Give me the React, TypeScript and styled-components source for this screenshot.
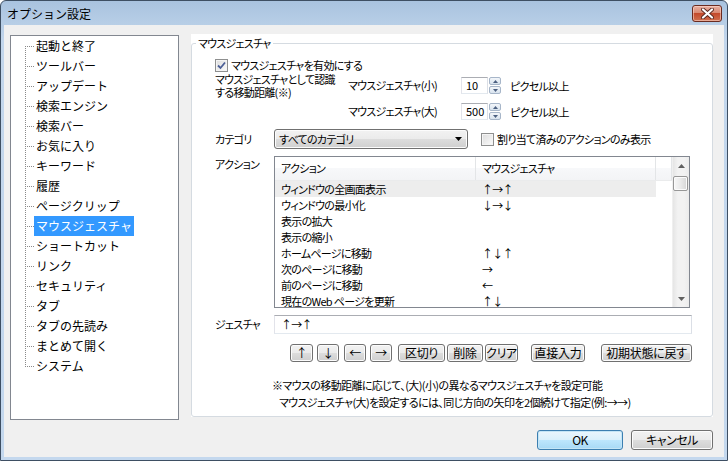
import React from "react";
import styled, { createGlobalStyle } from "styled-components";

const FONT = `"Noto Sans CJK JP", "Noto Sans", sans-serif`;

const GlobalStyle = createGlobalStyle`
	html, body {
		margin: 0;
		padding: 0;
		background: #fff;
	}
	body {
		font-family: ${FONT};
		font-size: 12px;
		color: #000;
	}
	* {
		box-sizing: border-box;
	}
`;

const Window = styled.div`
	width: 728px;
	height: 461px;
	display: flex;
	flex-direction: column;
	background: linear-gradient(#a9c3df, #c2d6ec 40px, #c4d8ee);
	border: 1px solid #3e4f63;
	border-radius: 6px 6px 0 0;
	overflow: hidden;
`;

const TitleBar = styled.div`
	height: 24px;
	flex: none;
	display: flex;
	align-items: flex-start;
	justify-content: space-between;
	padding: 0 5px 0 5px;
`;

const TitleText = styled.span`
	font-size: 12px;
	line-height: 25px;
	margin-left: 1px;
	color: #000;
`;

const CloseButton = styled.div`
	width: 30px;
	height: 17px;
	margin-top: 4px;
	border: 1px solid #6a2b20;
	border-radius: 3px;
	background: linear-gradient(#e8b0a2, #d98a73 45%, #c44a2c 50%, #d0704f);
	display: flex;
	align-items: center;
	justify-content: center;
	box-shadow: inset 0 0 0 1px rgba(255, 220, 210, 0.55);
`;

const Client = styled.div`
	flex: 1;
	margin: 0 3px 3px 3px;
	background: #f0f0f0;
	display: flex;
	flex-direction: column;
`;

const Main = styled.div`
	display: flex;
	align-items: flex-start;
	gap: 12px;
	padding: 9px 0 0 6px;
`;

const Tree = styled.div`
	width: 169px;
	height: 385px;
	margin-top: 1px;
	background: #fff;
	border: 1px solid #828790;
	padding-left: 14px;
`;

const TreeItem = styled.div`
	display: flex;
	align-items: center;
	height: 20px;
`;

const Connector = styled.span<{ $first?: boolean; $last?: boolean }>`
	width: 9px;
	height: 20px;
	flex: none;
	background-image: repeating-linear-gradient(
			to bottom,
			#8a8a8a 0 1px,
			transparent 1px 2px
		),
		repeating-linear-gradient(to right, #8a8a8a 0 1px, transparent 1px 2px);
	background-size: 1px ${(p) => (p.$first ? "10px" : p.$last ? "11px" : "20px")},
		9px 1px;
	background-position: 0 ${(p) => (p.$first ? "10px" : "0")}, 0 10px;
	background-repeat: no-repeat;
`;

const TreeLabel = styled.span<{ $selected?: boolean }>`
	font-size: 12px;
	line-height: 20px;
	padding: 0 2px;
	white-space: nowrap;
	background: ${(p) => (p.$selected ? "#3399ff" : "transparent")};
	color: ${(p) => (p.$selected ? "#fff" : "#000")};
`;

const Page = styled.div`
	width: 522px;
	height: 383px;
	background: #fff;
	display: flex;
	font-size: 11px;
	letter-spacing: -0.7px;
	font-feature-settings: "palt";
`;

const Group = styled.fieldset`
	flex: 1;
	margin: 0;
	padding: 0;
	min-width: 0;
	border: 1px solid #d5dbe1;
	border-radius: 3px;
`;

const GroupTitle = styled.legend`
	margin-left: 4px;
	padding: 0 2px;
	line-height: 18px;
`;

const Content = styled.div`
	padding-left: 23px;
`;

const Row = styled.div<{ $mt: number; $top?: boolean }>`
	display: flex;
	align-items: ${(p) => (p.$top ? "flex-start" : "center")};
	margin-top: ${(p) => p.$mt}px;
`;

const Label = styled.span<{ $w: number }>`
	width: ${(p) => p.$w}px;
	flex: none;
	white-space: nowrap;
	line-height: 17px;
`;

const CheckBox = styled.span<{ $ml?: number }>`
	width: 13px;
	height: 13px;
	flex: none;
	margin-left: ${(p) => p.$ml ?? 0}px;
	border: 1px solid #8e8f8f;
	background: linear-gradient(135deg, #dcdcdc, #fbfbfb);
	box-shadow: inset 0 0 0 1px #f4f4f4;
	display: flex;
	align-items: center;
	justify-content: center;
`;

const CheckText = styled.span`
	margin-left: 3px;
	white-space: nowrap;
	line-height: 15px;
`;

const Distance = styled.div`
	display: grid;
	grid-template-columns: 133px 113px 27px 13px auto;
	grid-template-rows: 17px 17px;
	row-gap: 9px;
	align-items: center;
	margin-top: 4px;
`;

const DistanceLabel = styled.div`
	grid-row: 1 / 3;
	align-self: start;
	margin-top: -4px;
	line-height: 13px;
	white-space: nowrap;
`;

const NumberBox = styled.div`
	height: 17px;
	border: 1px solid #abadb3;
	border-color: #abadb3 #dbdfe6 #e3e9ef #e2e3ea;
	background: #fff;
	line-height: 15px;
	padding-left: 4px;
	letter-spacing: 0;
`;

const Spin = styled.div`
	height: 17px;
	width: 12px;
	margin-left: 1px;
	display: flex;
	flex-direction: column;
	gap: 1px;
`;

const SpinHalf = styled.div`
	flex: 1;
	border: 1px solid #a7b6c9;
	border-radius: 2px;
	background: linear-gradient(#f3f6fa, #d8e3ee);
	display: flex;
	align-items: center;
	justify-content: center;
`;

const SpinText = styled.span`
	margin-left: 9px;
	white-space: nowrap;
`;

const Select = styled.div`
	width: 194px;
	height: 20px;
	border: 1px solid #707070;
	border-radius: 3px;
	background: linear-gradient(#f2f2f2, #ebebeb 50%, #dddddd 50%, #cfcfcf);
	box-shadow: inset 0 0 0 1px #fcfcfc;
	display: flex;
	align-items: center;
	justify-content: space-between;
	padding: 0 5px 0 4px;
	line-height: 18px;
`;

const ListView = styled.div`
	width: 416px;
	height: 152px;
	border: 1px solid #828790;
	background: #fff;
	display: flex;
	overflow: hidden;
`;

const ListBody = styled.div`
	flex: 1;
	overflow: hidden;
`;

const ListHeader = styled.div`
	display: flex;
	height: 24px;
	background: linear-gradient(#ffffff, #ffffff 50%, #f7f8fa 50%, #f3f4f6);
	border-bottom: 1px solid #eaebec;
`;

const HeaderCell = styled.div<{ $w?: number }>`
	width: ${(p) => (p.$w ? `${p.$w}px` : "auto")};
	flex: ${(p) => (p.$w ? "none" : "1")};
	border-right: 1px solid #e3e5e7;
	padding-left: 6px;
	line-height: 22px;
	white-space: nowrap;
`;

const ListRow = styled.div<{ $hl?: boolean }>`
	display: flex;
	width: 381px;
	height: 16px;
	background: ${(p) => (p.$hl ? "#ededed" : "transparent")};
`;

const Cell = styled.div<{ $w: number }>`
	width: ${(p) => p.$w}px;
	flex: none;
	padding-left: 6px;
	line-height: 16px;
	white-space: nowrap;
`;

const ScrollBar = styled.div`
	width: 17px;
	flex: none;
	display: flex;
	flex-direction: column;
	background: linear-gradient(to right, #e5e5e5, #f2f2f2 30%, #f2f2f2 70%, #ebebeb);
	border-left: 1px solid #efefef;
`;

const ScrollArrow = styled.div`
	height: 17px;
	display: flex;
	align-items: center;
	justify-content: center;
`;

const Thumb = styled.div`
	height: 15px;
	margin: 2px 1px 0 0;
	border: 1px solid #979797;
	border-radius: 2px;
	background: linear-gradient(to right, #f7f7f7, #eaeaea 50%, #d6d6d6);
	box-shadow: inset 0 0 0 1px #fbfbfb;
`;

const ScrollTrack = styled.div`
	flex: 1;
`;

const TextInput = styled.div`
	width: 418px;
	height: 19px;
	border: 1px solid #abadb3;
	border-color: #abadb3 #dbdfe6 #e3e9ef #e2e3ea;
	background: #fff;
	line-height: 17px;
	padding-left: 6px;
`;

const ToolRow = styled.div`
	display: flex;
	margin-top: 10px;
	padding-left: 75px;
`;

const ToolButton = styled.div<{ $w: number; $ml: number }>`
	width: ${(p) => p.$w}px;
	height: 18px;
	margin-left: ${(p) => p.$ml}px;
	border: 1px solid #707070;
	border-radius: 3px;
	background: linear-gradient(#f2f2f2, #ebebeb 50%, #dddddd 50%, #cfcfcf);
	box-shadow: inset 0 0 0 1px #fcfcfc;
	display: flex;
	align-items: center;
	justify-content: center;
	font-size: 12px;
	letter-spacing: -0.3px;
	line-height: 16px;
	white-space: nowrap;
`;

const Notes = styled.div`
	margin-top: 15px;
	padding-left: 57px;
	letter-spacing: -0.6px;
`;

const Note = styled.div<{ $indent?: number }>`
	padding-left: ${(p) => p.$indent ?? 0}px;
	line-height: 17px;
	white-space: nowrap;
`;

const Footer = styled.div`
	display: flex;
	justify-content: flex-end;
	gap: 8px;
	margin-top: 10px;
	padding-right: 11px;
	font-feature-settings: "palt";
`;

const DialogButton = styled.div<{ $w: number; $primary?: boolean }>`
	width: ${(p) => p.$w}px;
	height: 20px;
	border: 1px solid ${(p) => (p.$primary ? "#3c7fb1" : "#707070")};
	border-radius: 3px;
	background: ${(p) =>
		p.$primary
			? "linear-gradient(#eaf6fd, #d9f0fc 50%, #bee6fd 50%, #a7d9f5)"
			: "linear-gradient(#f2f2f2, #ebebeb 50%, #dddddd 50%, #cfcfcf)"};
	box-shadow: inset 0 0 0 1px ${(p) => (p.$primary ? "#c4e5f6" : "#fcfcfc")};
	display: flex;
	align-items: center;
	justify-content: center;
	line-height: 18px;
	letter-spacing: -0.5px;
`;

const treeItems = [
	"起動と終了",
	"ツールバー",
	"アップデート",
	"検索エンジン",
	"検索バー",
	"お気に入り",
	"キーワード",
	"履歴",
	"ページクリップ",
	"マウスジェスチャ",
	"ショートカット",
	"リンク",
	"セキュリティ",
	"タブ",
	"タブの先読み",
	"まとめて開く",
	"システム",
];

const actions = [
	["ウィンドウの全画面表示", "↑→↑"],
	["ウィンドウの最小化", "↓→↓"],
	["表示の拡大", ""],
	["表示の縮小", ""],
	["ホームページに移動", "↑↓↑"],
	["次のページに移動", "→"],
	["前のページに移動", "←"],
	["現在のWeb ページを更新", "↑↓"],
];

const toolButtons = [
	{ label: "↑", w: 23, ml: 0 },
	{ label: "↓", w: 22, ml: 4 },
	{ label: "←", w: 22, ml: 5 },
	{ label: "→", w: 22, ml: 4 },
	{ label: "区切り", w: 47, ml: 6 },
	{ label: "削除", w: 36, ml: 2 },
	{ label: "クリア", w: 33, ml: 2 },
	{ label: "直接入力", w: 54, ml: 13 },
	{ label: "初期状態に戻す", w: 91, ml: 16 },
];

const Tri: React.FC<{ dir: "up" | "down"; color?: string; w?: number; h?: number }> = ({
	dir,
	color = "#4a4a4a",
	w = 7,
	h = 4,
}) => (
	<svg width={w} height={h} viewBox={`0 0 ${w} ${h}`}>
		<polygon
			points={dir === "up" ? `0,${h} ${w},${h} ${w / 2},0` : `0,0 ${w},0 ${w / 2},${h}`}
			fill={color}
		/>
	</svg>
);

const Check: React.FC = () => (
	<svg width="9" height="9" viewBox="0 0 9 9">
		<path d="M1 4.5 L3.5 7 L8 1.5" stroke="#4c5f96" strokeWidth="1.8" fill="none" />
	</svg>
);

const SpinButtons: React.FC = () => (
	<Spin>
		<SpinHalf>
			<Tri dir="up" color="#4b5f80" w={5} h={3} />
		</SpinHalf>
		<SpinHalf>
			<Tri dir="down" color="#4b5f80" w={5} h={3} />
		</SpinHalf>
	</Spin>
);

const App: React.FC = () => {
	return (
		<>
			<GlobalStyle />
			<Window>
				<TitleBar>
					<TitleText>オプション設定</TitleText>
					<CloseButton>
						<svg width="13" height="11" viewBox="0 0 13 11">
							<path
								d="M2 1.5 L11 9.5 M11 1.5 L2 9.5"
								stroke="#5a2a22"
								strokeWidth="4"
								strokeLinecap="round"
							/>
							<path
								d="M2 1.5 L11 9.5 M11 1.5 L2 9.5"
								stroke="#fff"
								strokeWidth="2.2"
								strokeLinecap="round"
							/>
						</svg>
					</CloseButton>
				</TitleBar>
				<Client>
					<Main>
						<Tree>
							{treeItems.map((t, i) => (
								<TreeItem key={t}>
									<Connector $first={i === 0} $last={i === treeItems.length - 1} />
									<TreeLabel $selected={t === "マウスジェスチャ"}>{t}</TreeLabel>
								</TreeItem>
							))}
						</Tree>
						<Page>
							<Group>
								<GroupTitle>マウスジェスチャ</GroupTitle>
								<Content>
									<Row $mt={6}>
										<CheckBox>
											<Check />
										</CheckBox>
										<CheckText>マウスジェスチャを有効にする</CheckText>
									</Row>
									<Distance>
										<DistanceLabel>
											マウスジェスチャとして認識
											<br />
											する移動距離(※)
										</DistanceLabel>
										<Label $w={113}>マウスジェスチャ(小)</Label>
										<NumberBox>10</NumberBox>
										<SpinButtons />
										<SpinText>ピクセル以上</SpinText>
										<Label $w={113}>マウスジェスチャ(大)</Label>
										<NumberBox>500</NumberBox>
										<SpinButtons />
										<SpinText>ピクセル以上</SpinText>
									</Distance>
									<Row $mt={9}>
										<Label $w={59}>カテゴリ</Label>
										<Select>
											<span>すべてのカテゴリ</span>
											<Tri dir="down" color="#000" w={7} h={4} />
										</Select>
										<CheckBox $ml={13} />
										<CheckText>割り当て済みのアクションのみ表示</CheckText>
									</Row>
									<Row $mt={7} $top>
										<Label $w={59}>アクション</Label>
										<ListView>
											<ListBody>
												<ListHeader>
													<HeaderCell $w={201}>アクション</HeaderCell>
													<HeaderCell $w={180}>マウスジェスチャ</HeaderCell>
													<HeaderCell />
												</ListHeader>
												{actions.map(([a, g], i) => (
													<ListRow key={a} $hl={i === 0}>
														<Cell $w={201}>{a}</Cell>
														<Cell $w={180}>{g}</Cell>
													</ListRow>
												))}
											</ListBody>
											<ScrollBar>
												<ScrollArrow>
													<Tri dir="up" color="#606060" w={7} h={4} />
												</ScrollArrow>
												<Thumb />
												<ScrollTrack />
												<ScrollArrow>
													<Tri dir="down" color="#606060" w={7} h={4} />
												</ScrollArrow>
											</ScrollBar>
										</ListView>
									</Row>
									<Row $mt={7}>
										<Label $w={59}>ジェスチャ</Label>
										<TextInput>↑→↑</TextInput>
									</Row>
									<ToolRow>
										{toolButtons.map((b) => (
											<ToolButton key={b.label} $w={b.w} $ml={b.ml}>
												{b.label}
											</ToolButton>
										))}
									</ToolRow>
									<Notes>
										<Note>※マウスの移動距離に応じて、(大)(小)の異なるマウスジェスチャを設定可能</Note>
										<Note $indent={7}>
											マウスジェスチャ(大)を設定するには、同じ方向の矢印を2個続けて指定(例:→→)
										</Note>
									</Notes>
								</Content>
							</Group>
						</Page>
					</Main>
					<Footer>
						<DialogButton $w={86} $primary>
							OK
						</DialogButton>
						<DialogButton $w={82}>キャンセル</DialogButton>
					</Footer>
				</Client>
			</Window>
		</>
	);
};

export default App;
